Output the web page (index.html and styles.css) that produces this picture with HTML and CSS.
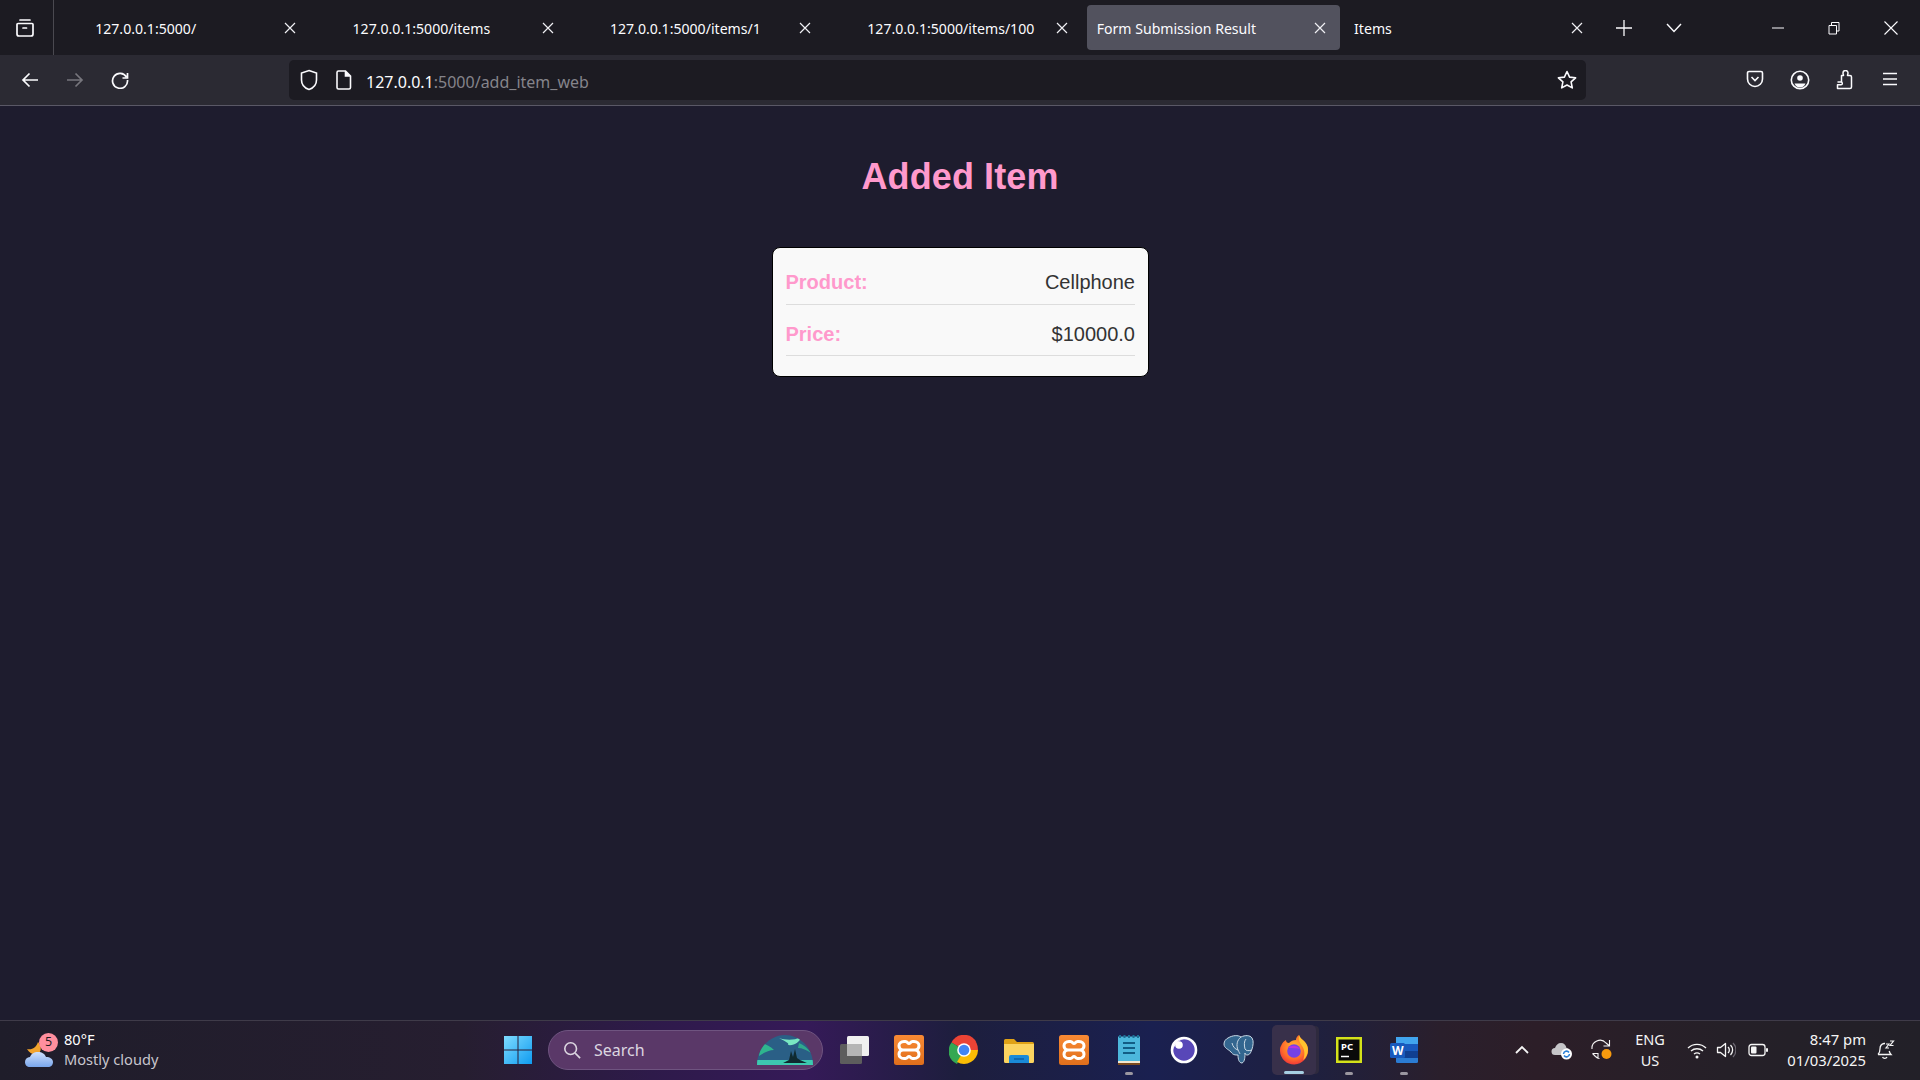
FILE: index.html
```html
<!DOCTYPE html>
<html lang="en">
<head>
<meta charset="utf-8">
<title>Form Submission Result</title>
<link rel="stylesheet" href="styles.css">
</head>
<body>
<svg class="defs" width="0" height="0" aria-hidden="true">
  <symbol id="x" viewBox="0 0 12 12"><path d="M1 1l10 10M11 1L1 11" fill="none" stroke="currentColor" stroke-width="1.2"/></symbol>
  <symbol id="xampp" viewBox="0 0 30 30">
    <defs><linearGradient id="xg" x1="0" y1="0" x2="0" y2="1"><stop offset="0" stop-color="#f98a34"/><stop offset="1" stop-color="#e06f1c"/></linearGradient></defs>
    <rect x="0" y="0" width="30" height="30" rx="2.5" fill="url(#xg)"/>
    <path d="M10 6.500h1.500c2 0 2.200 2 3.500 2s1.500-2 3.500-2H20c3.200 0 5 2 5 4.300 0 2-1.200 3.400-2.800 4.200 1.600.8 2.800 2.200 2.800 4.200 0 2.300-1.800 4.300-5 4.300h-1.500c-2 0-2.200-2-3.500-2s-1.500 2-3.500 2H10c-3.200 0-5-2-5-4.300 0-2 1.200-3.400 2.800-4.200C6.200 14.200 5 12.800 5 10.800c0-2.300 1.800-4.300 5-4.300z" fill="none" stroke="#fff" stroke-width="3"/>
    <path d="M8 15h14" stroke="#fff" stroke-width="3"/>
  </symbol>
</svg>

<header class="tabbar">
  <div class="tablist">
    <svg class="ic20" viewBox="0 0 20 20"><path d="M5 2h10M3 5.500h14a1 1 0 0 1 1 1V16a2 2 0 0 1-2 2H4a2 2 0 0 1-2-2V6.500a1 1 0 0 1 1-1zM8 10h3.500" fill="none" stroke="currentColor" stroke-width="1.700" stroke-linecap="round"/></svg>
  </div>
  <div class="tabs">
    <div class="tab has-icon"><span class="tab-title">127.0.0.1:5000/</span><svg class="close"><use href="#x"/></svg></div>
    <div class="tab has-icon"><span class="tab-title">127.0.0.1:5000/items</span><svg class="close"><use href="#x"/></svg></div>
    <div class="tab has-icon"><span class="tab-title">127.0.0.1:5000/items/1</span><svg class="close"><use href="#x"/></svg></div>
    <div class="tab has-icon"><span class="tab-title">127.0.0.1:5000/items/100</span><svg class="close"><use href="#x"/></svg></div>
    <div class="tab active"><span class="tab-title">Form Submission Result</span><svg class="close"><use href="#x"/></svg></div>
    <div class="tab"><span class="tab-title">Items</span><svg class="close"><use href="#x"/></svg></div>
  </div>
  <div class="tab-btn"><svg class="ic16" viewBox="0 0 16 16"><path d="M8 0v16M0 8h16" stroke="currentColor" stroke-width="1.300" fill="none"/></svg></div>
  <div class="tab-btn"><svg class="ic16" viewBox="0 0 16 16"><path d="M1 4l7 7.500L15 4" stroke="currentColor" stroke-width="1.400" fill="none"/></svg></div>
  <div class="winctl">
    <div class="win-btn"><svg class="ic14" viewBox="0 0 14 14"><path d="M1 7h12" stroke="currentColor" fill="none"/></svg></div>
    <div class="win-btn"><svg class="ic14" viewBox="0 0 14 14"><path d="M2 4.500h7.500V13H2zM4.500 4.500V1.500H12V10H9.500" stroke="currentColor" fill="none"/></svg></div>
    <div class="win-btn"><svg class="ic14" viewBox="0 0 14 14"><path d="M.5.500l13 13M13.500.500l-13 13" stroke="currentColor" stroke-width="1.100" fill="none"/></svg></div>
  </div>
</header>

<nav class="toolbar">
  <div class="nav-btn"><svg class="ic18" viewBox="0 0 18 18"><path d="M17 9H2M8.500 2.500L2 9l6.500 6.500" fill="none" stroke="currentColor" stroke-width="1.700"/></svg></div>
  <div class="nav-btn dim"><svg class="ic18" viewBox="0 0 18 18"><path d="M1 9h15M9.500 2.500L16 9l-6.500 6.500" fill="none" stroke="currentColor" stroke-width="1.700"/></svg></div>
  <div class="nav-btn"><svg class="ic18" viewBox="0 0 18 18"><path d="M15.500 6A7.500 7.500 0 1 0 16.500 9M16.500 2v5h-5" fill="none" stroke="currentColor" stroke-width="1.700"/></svg></div>
  <div class="urlbar">
    <svg class="ic-shield" viewBox="0 0 18 22"><path d="M9 1.500l7.500 2.500v7c0 4.500-3 8-7.500 9.500C4.500 19 1.500 15.500 1.500 11V4z" fill="none" stroke="currentColor" stroke-width="1.600"/></svg>
    <svg class="ic-page" viewBox="0 0 16 20"><path d="M2.500 1h7l5 5v11.500a1.500 1.500 0 0 1-1.500 1.500H2.500A1.500 1.500 0 0 1 1 17.500v-15A1.500 1.500 0 0 1 2.500 1zM9.500 1v5h5" fill="none" stroke="currentColor" stroke-width="1.600"/><path d="M9.500 1l5 5h-5z" fill="currentColor"/></svg>
    <span class="url"><span class="url-host">127.0.0.1</span>:5000/add_item_web</span>
    <svg class="ic-star" viewBox="0 0 20 20"><path d="M10 1.500l2.600 5.600 6 .7-4.500 4.100 1.200 6L10 15l-5.300 2.900 1.200-6L1.400 7.800l6-.7z" fill="none" stroke="currentColor" stroke-width="1.600" stroke-linejoin="round"/></svg>
  </div>
  <div class="tools">
    <div class="tool"><svg class="ic18" viewBox="0 0 18 18"><path d="M3 1.500h12A1.500 1.500 0 0 1 16.500 3v6a7.500 7.500 0 0 1-15 0V3A1.500 1.500 0 0 1 3 1.500z" fill="none" stroke="currentColor" stroke-width="1.600"/><path d="M5.500 7L9 10.500 12.500 7" fill="none" stroke="currentColor" stroke-width="1.600"/></svg></div>
    <div class="tool"><svg class="ic20" viewBox="0 0 20 20"><circle cx="10" cy="10" r="8.700" fill="none" stroke="currentColor" stroke-width="1.600"/><circle cx="10" cy="8" r="2.800" fill="currentColor"/><path d="M4.500 13.500h11c-1 2.500-3 4-5.500 4s-4.500-1.500-5.500-4z" fill="currentColor"/></svg></div>
    <div class="tool"><svg class="ic20" viewBox="0 0 20 20"><path d="M2.500 12h3.500c1.800 0 1.800 2.800 0 2.800H2.500V18.500H15a1.500 1.500 0 0 0 1.500-1.500V7A1.500 1.500 0 0 0 15 5.500h-2.500c0-1 .5-1.500.5-2.500a2.500 2.500 0 0 0-5 0c0 1 .5 1.500.5 2.500H6.500V12" fill="none" stroke="currentColor" stroke-width="1.500" stroke-linejoin="round"/></svg></div>
    <div class="tool"><svg class="ic18" viewBox="0 0 18 18"><path d="M2 3.500h14M2 9h14M2 14.500h14" fill="none" stroke="currentColor" stroke-width="1.500"/></svg></div>
  </div>
</nav>

<main class="page">
  <h1 class="page-title">Added Item</h1>
  <section class="card">
    <div class="row"><span class="label">Product:</span><span class="value">Cellphone</span></div>
    <div class="row"><span class="label">Price:</span><span class="value">$10000.0</span></div>
  </section>
</main>

<footer class="taskbar">
  <div class="weather">
    <div class="weather-icon">
      <svg class="weather-svg" viewBox="0 0 32 32">
        <defs><linearGradient id="cloudg" x1="0" y1="0" x2="0" y2="1"><stop offset="0" stop-color="#cfe0fb"/><stop offset="1" stop-color="#79a6ec"/></linearGradient></defs>
        <path d="M3 13c5 1 9-1 11-7 3 3 4 8 1 11-4 3-9 1-12-4z" fill="#f2a32c"/>
        <path d="M6 31c-3 0-5-2-5-5s2-4.500 5-5c1-3 4-5 8-5s7 2 8 5c4 0 7 2 7 5s-2 5-5 5z" fill="url(#cloudg)"/>
      </svg>
      <span class="weather-badge">5</span>
    </div>
    <div class="weather-text">
      <div class="temp">80°F</div>
      <div class="cond">Mostly cloudy</div>
    </div>
  </div>

  <div class="apps">
    <div class="app"><svg class="ic30" viewBox="0 0 30 30">
      <defs><linearGradient id="wing" x1="0" y1="0" x2="1" y2="1"><stop offset="0" stop-color="#7fdcff"/><stop offset="1" stop-color="#0f9bf0"/></linearGradient></defs>
      <path d="M1 1h13.500v13.500H1zM15.500 1H29v13.500H15.500zM1 15.500h13.500V29H1zM15.500 15.500H29V29H15.500z" fill="url(#wing)"/></svg></div>
    <div class="search">
      <svg class="search-ic" viewBox="0 0 20 20"><circle cx="8.500" cy="8.500" r="6.500" fill="none" stroke="currentColor" stroke-width="1.800"/><path d="M13.500 13.500L19 19" stroke="currentColor" stroke-width="1.800"/></svg>
      <span class="search-text">Search</span>
      <svg class="aurora" viewBox="0 0 56 30">
        <defs><clipPath id="aclip"><path d="M0 30C0 12 14 0 28 0s28 12 28 30z"/></clipPath></defs>
        <g clip-path="url(#aclip)">
          <rect width="56" height="30" fill="#2a5f86"/>
          <path d="M4 8c5 1 9 3 13 7-5 0-11 3-15 6z" fill="#2fb58e"/>
          <path d="M22 3c6 2 14 3 22-1-1 5-7 9-13 8 2-2-4-4-9-7z" fill="#79e8c2"/>
          <path d="M42 8c4 2 8 4 12 10-4-3-9-5-13-5z" fill="#2fa88c"/>
          <rect y="25" width="56" height="5" fill="#3dc9b0"/>
          <path d="M26 28l6-3 2-9 2 6 2-8 2 9 3 2 7 3z" fill="#0f2a30"/>
        </g>
      </svg>
    </div>
    <div class="app app-first"><svg class="ic30" viewBox="0 0 30 30"><rect x="1" y="9" width="22" height="20" rx="1.500" fill="#5d5d5d"/><rect x="8" y="1" width="22" height="20" rx="1.500" fill="#f0f0f0"/><rect x="8" y="9" width="15" height="12" fill="#b5b5b5"/></svg></div>
    <div class="app"><svg class="ic30"><use href="#xampp"/></svg></div>
    <div class="app"><svg class="ic30" viewBox="0 0 30 30">
      <path d="M15 15L2.500 7.500A14 14 0 0 1 27.500 7.500z" fill="#ea4335"/>
      <path d="M15 15L8 29A14 14 0 0 1 2.500 7.500z" fill="#34a853"/>
      <path d="M15 15H29A14 14 0 0 1 8 27z" fill="#fbbc04"/>
      <path d="M15 8h12.500A14 14 0 0 1 29 15H21z" fill="#ea4335"/>
      <circle cx="15" cy="15" r="6.800" fill="#fff"/><circle cx="15" cy="15" r="5.300" fill="#4285f4"/></svg></div>
    <div class="app"><svg class="ic30" viewBox="0 0 30 30">
      <path d="M0 5.500A1.500 1.500 0 0 1 1.500 4h8.500l3 3h15.500A1.500 1.500 0 0 1 30 8.500V10H0z" fill="#e0a216"/>
      <path d="M0 9h30v17.500a1.500 1.500 0 0 1-1.500 1.500h-27A1.500 1.500 0 0 1 0 26.500z" fill="#fcd460"/>
      <path d="M5 28v-6a2 2 0 0 1 2-2h16a2 2 0 0 1 2 2v6z" fill="#1a8ad8"/><path d="M10 24h10" stroke="#0c5ea6" stroke-width="1.500"/></svg></div>
    <div class="app"><svg class="ic30"><use href="#xampp"/></svg></div>
    <div class="app running"><svg class="ic30" viewBox="0 0 30 30">
      <path d="M4 1.500h22V26H4z" fill="#4cb7dc"/><path d="M4 26h22v2.500H4z" fill="#f3e7d0"/><path d="M4 28h22v2H4z" fill="#7b4a1e"/>
      <path d="M9 8h12M9 13h12M9 18h12" stroke="#125d85" stroke-width="1.800"/>
      <path d="M6 0v3M10.500 0v3M15 0v3M19.500 0v3M24 0v3" stroke="#1c6f95" stroke-width="2"/></svg></div>
    <div class="app"><svg class="ic30" viewBox="0 0 30 30"><circle cx="15" cy="15" r="12" fill="#5847b8" stroke="#fff" stroke-width="2.600"/><circle cx="10" cy="10" r="3.800" fill="#fff"/><path d="M4 15C4 9 9 4 15 4c-5 1-9 5-11 11z" fill="#fff"/></svg></div>
    <div class="app"><svg class="ic32" viewBox="0 0 32 32">
      <path d="M5 4c5-3 10-3 13-1 4-2 9-2 11 1 2 3 1 8 0 11-1 3-2 6-5 6-1 0-2-1-2-2 0 3 0 9-3 10-3 0-4-4-4-8-3 0-5 0-7-3C5 15 1 14 1 10c0-3 2-5 4-6z" fill="#33668f" stroke="#c9d8e4" stroke-width="1"/>
      <path d="M18 3c-4 3-5 8-3 13 1 2 2 4 2 4M23 5c-2 2-2 6-1 10 1 2 4 2 7 1" fill="none" stroke="#c9d8e4" stroke-width="1"/><path d="M9 9c1 4 3 6 6 7" fill="none" stroke="#c9d8e4" stroke-width="1"/></svg></div>
    <div class="app focused running-on"><svg class="ic30" viewBox="0 0 30 30">
      <defs><radialGradient id="ffg" cx="0.500" cy="0.400" r="0.700"><stop offset="0" stop-color="#ffbd2e"/><stop offset="0.600" stop-color="#ff6a2b"/><stop offset="1" stop-color="#e8203f"/></radialGradient></defs>
      <path d="M2 11c1-3 3-5 5-6 0 2 1 3 3 3 2-2 4-3 7-3 0-2 1-4 3-5 1 3 3 4 5 6 3 3 4 6 4 9a14 14 0 0 1-28 1c0-2 0-4 1-5z" fill="url(#ffg)"/>
      <path d="M20 0c1 3 3 4 5 6 3 3 4 6 4 9 0 4-2 8-5 10 2-4 2-10-1-14-2-3-4-6-3-11z" fill="#ffc32e"/>
      <circle cx="15" cy="16" r="6.800" fill="#7542e5"/><path d="M9 13c3-3 9-3 12 1-3-1-8-1-12-1z" fill="#b833e1"/></svg></div>
    <div class="app running"><svg class="ic26" viewBox="0 0 26 26">
      <rect x="0" y="0" width="26" height="26" fill="#d4e21a"/><rect x="2.500" y="2.500" width="21" height="21" fill="#0a0a0a"/>
      <text class="pc-text" x="5" y="13">PC</text><path d="M5 19.500h8" stroke="#fff" stroke-width="1.500"/></svg></div>
    <div class="app running"><svg class="ic30" viewBox="0 0 30 30">
      <rect x="7" y="2" width="22" height="26" rx="1.500" fill="#2b7cd3"/><path d="M7 9h22v7H7z" fill="#185abd"/><path d="M7 16h22v7H7z" fill="#103f91"/><path d="M7 2h22v7H7z" fill="#41a5ee"/>
      <rect x="1" y="8" width="15" height="15" rx="1.500" fill="#185abd"/><text class="w-text" x="3" y="20">W</text></svg></div>
  </div>

  <div class="tray">
    <div class="tray-item"><svg class="ic16" viewBox="0 0 16 16"><path d="M2 11l6-6 6 6" fill="none" stroke="currentColor" stroke-width="1.800"/></svg></div>
    <div class="tray-item"><svg class="ic22" viewBox="0 0 22 20"><path d="M4 15a3.500 3.500 0 0 1 0-7c1-3 3-5 6-5 3 0 5 2 5.500 5 2 0 3.500 1.500 3.500 3.500V15z" fill="#c5c5c8"/><circle cx="15.500" cy="14" r="5.500" fill="#fff"/><path d="M12.500 14a3 3 0 0 1 5.500-1.500M18.500 14a3 3 0 0 1-5.500 1.500" fill="none" stroke="#2a7fd6" stroke-width="1.500"/></svg></div>
    <div class="tray-item"><svg class="ic22" viewBox="0 0 22 22"><path d="M1 10a8 8 0 0 1 14-6l3 2.500M18.500 1v6h-6M1.500 14.500H7v5M1.500 14.500l3 3a8 8 0 0 0 4 2" fill="none" stroke="currentColor" stroke-width="1.100"/><circle cx="15.500" cy="15" r="5" fill="#f79a0e"/></svg></div>
    <div class="lang">ENG<br>US</div>
    <div class="status">
      <svg class="ic20" viewBox="0 0 20 20"><path d="M1 8a13 13 0 0 1 18 0M4 11a9 9 0 0 1 12 0M7 14a5 5 0 0 1 6 0" fill="none" stroke="currentColor" stroke-width="1.400"/><circle cx="10" cy="17" r="1.500" fill="currentColor"/></svg>
      <svg class="ic20" viewBox="0 0 20 20"><path d="M1.500 7.500h3l5-4v13l-5-4h-3z" fill="none" stroke="currentColor" stroke-width="1.300" stroke-linejoin="round"/><path d="M12 7a4 4 0 0 1 0 6M14.500 5a7 7 0 0 1 0 10" fill="none" stroke="currentColor" stroke-width="1.300"/><path d="M17 3a10 10 0 0 1 0 14" fill="none" stroke="#6b6670" stroke-width="1.200"/></svg>
      <svg class="ic20 batt" viewBox="0 0 20 14"><rect x="1" y="1.500" width="16" height="11" rx="2.500" fill="none" stroke="currentColor" stroke-width="1.300"/><rect x="3" y="3.500" width="5.500" height="7" rx="1" fill="currentColor"/><rect x="18" y="5" width="2" height="4" rx="1" fill="currentColor"/></svg>
    </div>
    <div class="clock"><div>8:47 pm</div><div>01/03/2025</div></div>
    <svg class="bell" viewBox="0 0 20 20"><path d="M3 14.500c1-1 2-2.500 2-5.500 0-3 1.500-5 4-5.500.5 0 1 0 1 0M3 14.500h13c-1-1-1.500-2-1.800-3.500M7.500 17a2.500 2.500 0 0 0 4.500 0" fill="none" stroke="currentColor" stroke-width="1.300"/><path d="M11 4h3l-3 4h3M15 1h3.500l-3.500 4.500h3.500" fill="none" stroke="currentColor" stroke-width="1.200"/></svg>
  </div>
</footer>
</body>
</html>
```

FILE: styles.css
```css
* { box-sizing: border-box; }
html, body { margin: 0; height: 100%; }
body {
  display: flex;
  flex-direction: column;
  height: 100vh;
  overflow: hidden;
  background: #1e1c2e;
  color: #fbfbfe;
  font-family: "Noto Sans", "Open Sans", sans-serif;
}
.defs { display: block; height: 0; width: 0; }
svg { display: block; flex: none; }
.ic14 { width: 14px; height: 14px; }
.ic16 { width: 16px; height: 16px; }
.ic18 { width: 18px; height: 18px; }
.ic20 { width: 20px; height: 20px; }
.ic22 { width: 22px; height: 22px; }
.ic26 { width: 26px; height: 26px; }
.ic30 { width: 30px; height: 30px; }
.ic32 { width: 32px; height: 32px; }

/* Tab strip */
.tabbar {
  display: flex;
  align-items: stretch;
  height: 55px;
  flex: none;
  background: #1c1b22;
}
.tablist {
  width: 54px;
  flex: none;
  display: flex;
  align-items: center;
  padding-left: 15px;
  border-right: 1px solid #4a4950;
}
.tabs { display: flex; padding-left: 1px; }
.tab {
  width: 253px;
  margin: 5px 2.2px;
  padding: 0 14px 0 10px;
  display: flex;
  align-items: center;
  border-radius: 4px;
  font-size: 14.100px;
}
.tab.has-icon { padding-left: 38px; }
.tab.active { background: #52525e; }
.tab-title { flex: 1; white-space: nowrap; overflow: hidden; padding-top: 1px; }
.close { width: 12px; height: 12px; color: #f0f0f4; }
.tab-btn { width: 50px; display: flex; align-items: center; justify-content: center; flex: none; }
.winctl { display: flex; margin-left: auto; padding-right: 1px; }
.win-btn { width: 56.500px; display: flex; align-items: center; justify-content: center; }

/* Toolbar */
.toolbar {
  display: flex;
  align-items: center;
  height: 51px;
  flex: none;
  padding: 0 0 1px 7px;
  background: #2b2a33;
  border-bottom: 1px solid #5a5866;
}
.nav-btn { width: 45px; display: flex; justify-content: center; }
.nav-btn.dim { color: #77767d; }
.urlbar {
  width: 1297px;
  height: 40px;
  margin-left: 147px;
  display: flex;
  align-items: center;
  padding: 0 9px 0 11px;
  background: #1c1b22;
  border-radius: 5px;
}
.ic-shield { width: 18px; height: 22px; }
.ic-page { width: 16px; height: 20px; margin-left: 18px; }
.url {
  margin-left: 14px;
  margin-top: 5px;
  font-size: 16px;
  color: #85848b;
  flex: 1;
}
.url-host { color: #fbfbfe; }
.ic-star { width: 20px; height: 20px; }
.tools { display: flex; margin-left: 146px; }
.tool { width: 45px; display: flex; justify-content: center; }

/* Page */
.page { flex: 1; display: flex; flex-direction: column; align-items: center; padding-top: 50px; }
.page-title {
  margin: 0 0 50px;
  font: bold 36px/41px "Liberation Sans", Arial, sans-serif;
  letter-spacing: 0.1px;
  color: #ff99cc;
}
.card {
  width: 377px;
  padding: 6px 12.500px 20px 13px;
  background: #f9f9f9;
  border: 1px solid #000;
  border-radius: 8px;
  font: 20px/23px "Liberation Sans", Arial, sans-serif;
}
.row {
  display: flex;
  justify-content: space-between;
  padding: 17px 0 10px;
  border-bottom: 1px solid #ddd;
}
.row + .row { padding: 18px 0 9px; }
.label { font-weight: bold; color: #ff99cc; }
.value { color: #333; }

/* Taskbar */
.taskbar {
  display: flex;
  align-items: center;
  height: 60px;
  flex: none;
  padding-bottom: 2px;
  border-top: 1px solid #3f3b49;
  background: linear-gradient(90deg, #1f1d2a 0, #261e30 24%, #2e1a4a 34%, #351a58 42%, #1d1e3d 50%, #1a2050 60%, #1e2040 68%, #2a1f2c 75%, #2c1e28 80%, #252028 90%, #222028 100%);
}
.weather { width: 490px; flex: none; display: flex; align-items: center; padding-left: 24px; }
.weather-icon { position: relative; width: 40px; height: 40px; flex: none; }
.weather-svg { width: 32px; height: 32px; margin-top: 6px; }
.weather-badge {
  position: absolute;
  left: 15px;
  top: 3px;
  width: 19px;
  height: 19px;
  border-radius: 50%;
  background: #ff8f9e;
  color: #1c1b22;
  font-size: 12.500px;
  line-height: 18px;
  text-align: center;
}
.weather-text { font-size: 14.600px; line-height: 20px; margin-top: -2px; }
.temp { color: #fff; }
.cond { color: #c8c6ce; }

.apps { display: flex; align-items: center; flex: none; }
.app {
  position: relative;
  width: 55px;
  height: 50px;
  display: flex;
  align-items: center;
  justify-content: center;
}
.app-first { margin-left: 3px; }
.running::after, .running-on::after {
  content: "";
  position: absolute;
  bottom: 0;
  left: 24px;
  width: 8px;
  height: 3px;
  border-radius: 2px;
  background: #9b97a0;
}
.running-on::after { width: 20px; background: #a6cfe2; }
.focused { background: #38304a; border-radius: 5px; box-shadow: 4px 0 0 -1px #2e2a3e; width: 44px; margin: 0 5.500px; }
.focused.running-on::after { left: 12px; bottom: 1px; }
.search {
  width: 275px;
  height: 40px;
  margin-left: 3px;
  display: flex;
  align-items: center;
  padding-left: 14px;
  background: #5a3868;
  border: 1px solid #6f5480;
  border-radius: 20px;
  color: #dcd6e0;
}
.search-ic { width: 18px; height: 18px; }
.search-text { margin-left: 13px; font-size: 16px; }
.aurora { width: 56px; height: 30px; margin-left: auto; margin-right: 9px; }
.pc-text { font: bold 9.500px "Noto Sans", sans-serif; fill: #fff; }
.w-text { font: bold 12px "Noto Sans", sans-serif; fill: #fff; }

.tray { display: flex; align-items: center; flex: none; margin-left: 71px; color: #f5f5f5; }
.tray-item { width: 40px; display: flex; justify-content: center; }
.lang { width: 56px; text-align: center; font-size: 14.500px; line-height: 21px; }
.status { display: flex; align-items: center; gap: 9px; margin-left: 9px; }
.batt { height: 14px; margin-left: 3px; }
.clock { width: 98px; text-align: right; font-size: 14.800px; line-height: 21px; }
.bell { width: 20px; height: 20px; margin-left: 9px; }
```
